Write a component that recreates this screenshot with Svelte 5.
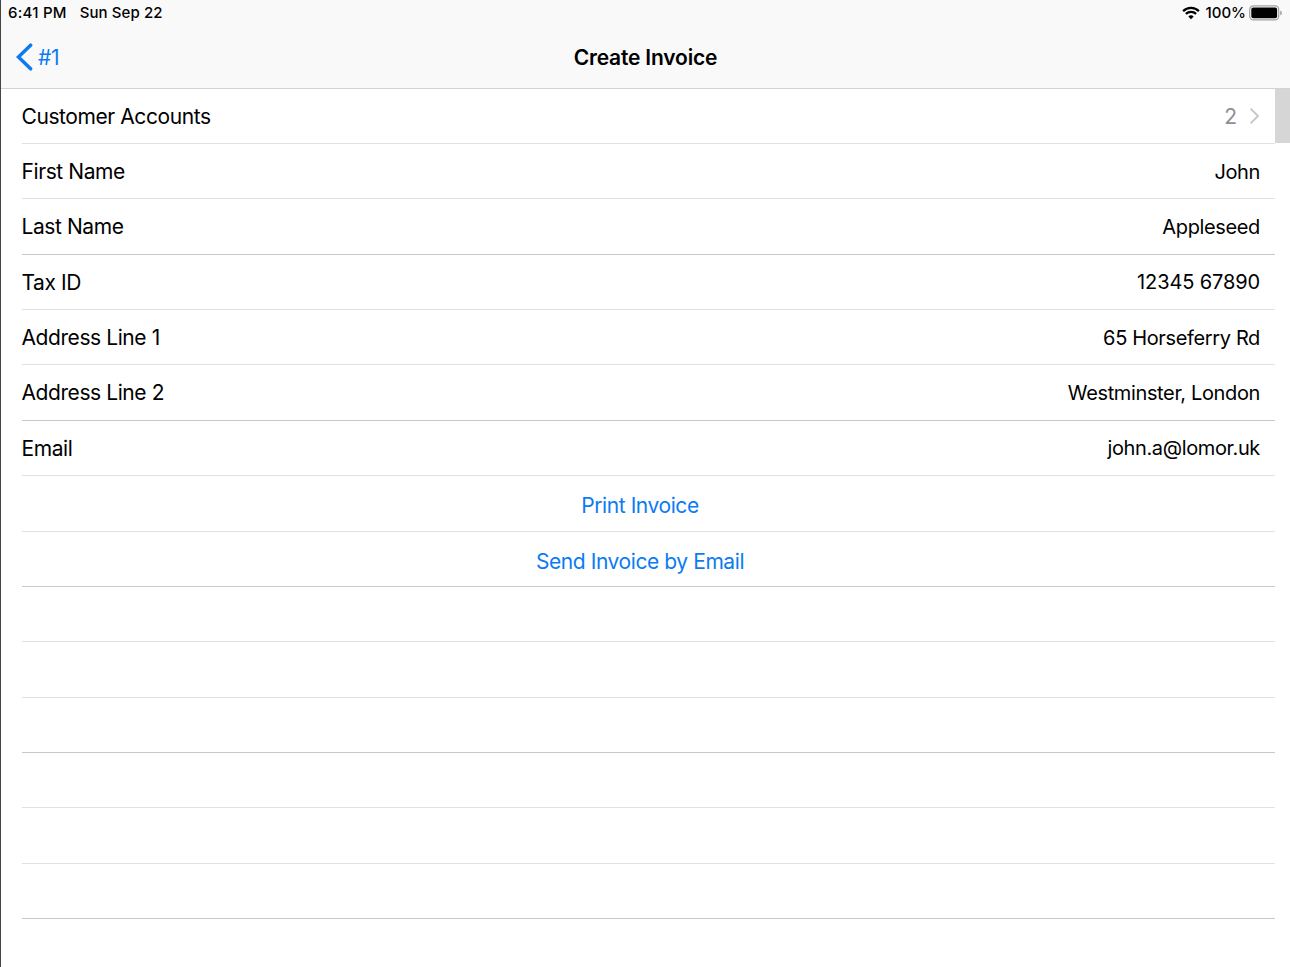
<script lang="ts">
  type Field = { label: string; value: string; numeric?: boolean };

  let accounts = 2;

  let fields: Field[] = [
    { label: 'First Name', value: 'John' },
    { label: 'Last Name', value: 'Appleseed' },
    { label: 'Tax ID', value: '12345 67890', numeric: true },
    { label: 'Address Line 1', value: '65 Horseferry Rd' },
    { label: 'Address Line 2', value: 'Westminster, London' },
    { label: 'Email', value: 'john.a@lomor.uk' },
  ];

  let actions = ['Print Invoice', 'Send Invoice by Email'];
  let emptyRows = [0, 1, 2, 3, 4, 5];
</script>

<div class="screen">
  <header>
    <div class="status-bar">
      <span class="time">6:41 PM</span>
      <span class="date">Sun Sep 22</span>
      <div class="indicators">
        <svg class="wifi" width="18" height="14" viewBox="0 0 18 14">
          <path d="M1.1 5.1A11.2 11.2 0 0 1 16.9 5.1" />
          <path d="M3.9 7.9A7.2 7.2 0 0 1 14.1 7.9" />
          <path class="dot" d="M9 13.3L6.3 10.6A3.9 3.9 0 0 1 11.7 10.6Z" />
        </svg>
        <span class="percent">100%</span>
        <svg class="battery" width="34" height="16" viewBox="0 0 34 16">
          <rect class="case" x="0.7" y="0.9" width="29" height="14" rx="3.6" />
          <rect x="2.3" y="2.5" width="25.8" height="10.8" rx="2" />
          <path class="cap" d="M31.2 5.5Q33 6.1 33 8T31.2 10.5Z" />
        </svg>
      </div>
    </div>
    <nav>
      <button class="back">
        <svg width="17" height="28" viewBox="0 0 17 28">
          <path d="M14.6 2.2L2.4 14L14.6 25.8" />
        </svg>
        <span>#1</span>
      </button>
      <h1>Create Invoice</h1>
    </nav>
  </header>

  <main>
    <div class="table">
      <div class="row first">
        <span class="label">Customer Accounts</span>
        <span class="count">{accounts}</span>
        <svg class="chevron" width="11" height="18" viewBox="0 0 11 18">
          <path d="M1.5 1.6L9 9L1.5 16.4" />
        </svg>
      </div>
      {#each fields as field}
        <div class="row">
          <span class="label">{field.label}</span>
          <span class="value" class:numeric={field.numeric}>{field.value}</span>
        </div>
      {/each}
      {#each actions as action}
        <div class="row action">
          <button>{action}</button>
        </div>
      {/each}
      {#each emptyRows as row (row)}
        <div class="row"></div>
      {/each}
    </div>
    <div class="edge"></div>
  </main>
</div>

<style>
  :global(body) {
    margin: 0;
    background: #fff;
  }

  .screen {
    box-sizing: border-box;
    height: 967px;
    border-left: 1px solid #444446;
    background: #fff;
    color: #000;
    font-family: Inter, sans-serif;
    font-size: 21px;
    overflow: hidden;
  }

  header {
    box-sizing: border-box;
    height: 89px;
    background: #f9f9f9;
    border-bottom: 1px solid #d3d3d5;
  }

  .status-bar {
    box-sizing: border-box;
    display: flex;
    align-items: center;
    height: 26px;
    padding: 0 7px 1px 7px;
    font-size: 15px;
    font-weight: 500;
    white-space: nowrap;
  }

  .time {
    letter-spacing: 0.25px;
  }

  .date {
    margin-left: 13px;
    letter-spacing: 0.08px;
  }

  .indicators {
    display: flex;
    align-items: center;
    margin-left: auto;
  }

  .wifi {
    margin-right: 6px;
    fill: none;
    stroke: #000;
    stroke-width: 2.2;
  }

  .wifi .dot {
    fill: #000;
    stroke: none;
  }

  .battery {
    margin-left: 3px;
  }

  .battery .case {
    fill: none;
    stroke: #a2a2a2;
    stroke-width: 1.2;
  }

  .battery .cap {
    fill: #a2a2a2;
  }

  nav {
    display: grid;
    grid-template-columns: 1fr auto 1fr;
    align-items: center;
    height: 62px;
  }

  button {
    padding: 0;
    border: none;
    background: none;
    color: #0b7bf2;
    font: inherit;
    cursor: pointer;
  }

  .back {
    display: flex;
    align-items: center;
    gap: 5px;
    padding-left: 15px;
    letter-spacing: -0.4px;
  }

  .back path {
    fill: none;
    stroke: #0b7bf2;
    stroke-width: 3.5;
    stroke-linecap: round;
  }

  h1 {
    margin: 0;
    font-size: 21px;
    font-weight: 600;
    letter-spacing: -0.18px;
  }

  main {
    display: flex;
  }

  .table {
    flex: 1;
    padding-left: 21px;
  }

  .row {
    box-sizing: border-box;
    display: flex;
    align-items: center;
    height: 55.36px;
    padding: 0.5px 15px 0 0;
    border-bottom: 1px solid #e1e1e3;
    white-space: nowrap;
  }

  .row:nth-child(3n) {
    border-bottom-color: #c9c9cb;
  }

  .row.first {
    height: 55px;
  }

  .label,
  .action button {
    letter-spacing: -0.42px;
  }

  .label {
    margin-left: -0.5px;
  }

  .value,
  .count {
    margin-left: auto;
  }

  .value {
    padding-top: 0.5px;
    font-size: 20px;
    letter-spacing: -0.36px;
  }

  .value.numeric {
    letter-spacing: -0.12px;
  }

  .count {
    color: #8e8e93;
  }

  .chevron {
    margin-left: 12px;
    fill: none;
    stroke: #c7c7cc;
    stroke-width: 2;
  }

  .action {
    justify-content: center;
    padding: 5.3px 17px 0 0;
  }

  .edge {
    width: 15px;
    height: 54px;
    background: #d6d6d6;
  }
</style>
